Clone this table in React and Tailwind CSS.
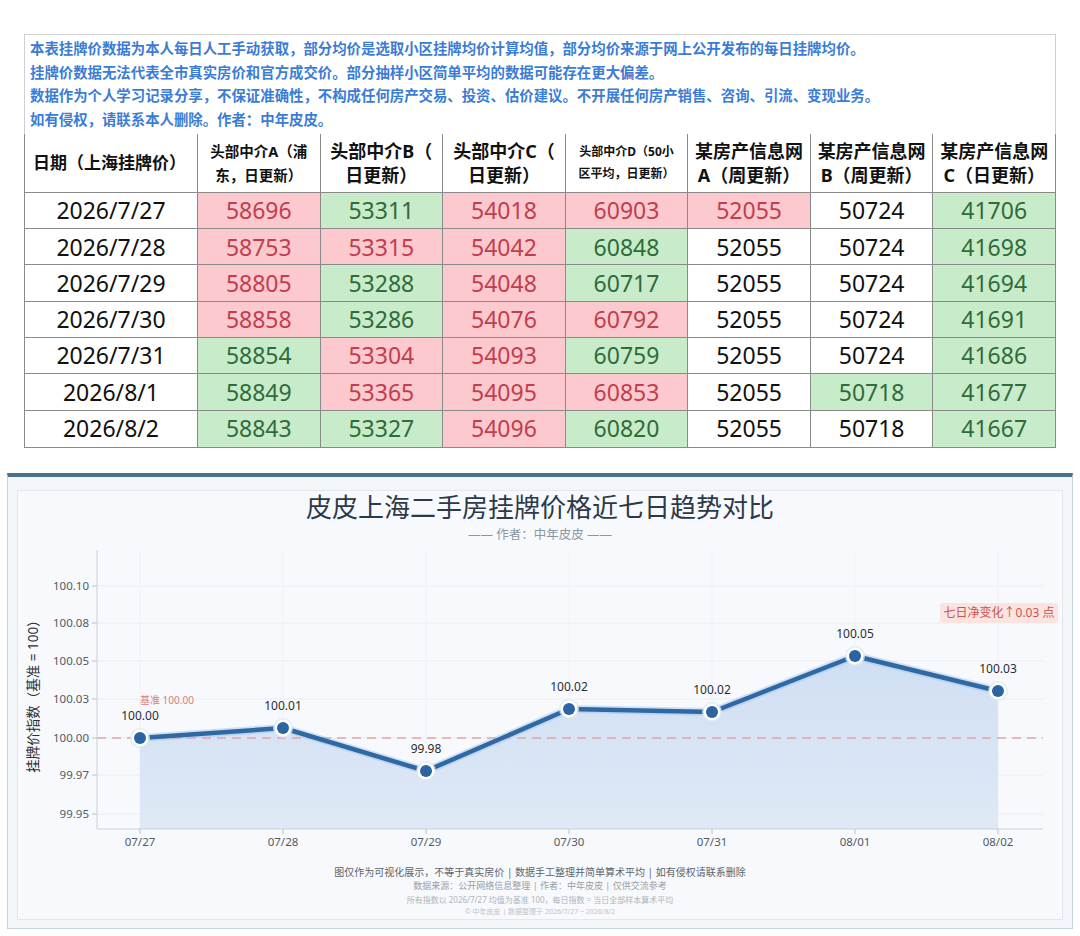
import React from 'react';

const rows = [
  ['2026/7/27', [['58696','r'],['53311','g'],['54018','r'],['60903','r'],['52055','r'],['50724','w'],['41706','g']]],
  ['2026/7/28', [['58753','r'],['53315','r'],['54042','r'],['60848','g'],['52055','w'],['50724','w'],['41698','g']]],
  ['2026/7/29', [['58805','r'],['53288','g'],['54048','r'],['60717','g'],['52055','w'],['50724','w'],['41694','g']]],
  ['2026/7/30', [['58858','r'],['53286','g'],['54076','r'],['60792','r'],['52055','w'],['50724','w'],['41691','g']]],
  ['2026/7/31', [['58854','g'],['53304','r'],['54093','r'],['60759','g'],['52055','w'],['50724','w'],['41686','g']]],
  ['2026/8/1', [['58849','g'],['53365','r'],['54095','r'],['60853','r'],['52055','w'],['50718','g'],['41677','g']]],
  ['2026/8/2', [['58843','g'],['53327','g'],['54096','r'],['60820','g'],['52055','w'],['50718','w'],['41667','g']]],
];

const tone = {
  r: 'bg-[#fcc9ce] text-[#c23d4d]',
  g: 'bg-[#c8ebc9] text-[#2f6b3b]',
  w: 'bg-white text-[#111]',
};

const xs = [140, 283, 426, 569, 712, 855, 998];
const ys = [737, 727, 770, 708, 711, 655, 690];
const vals = ['100.00', '100.01', '99.98', '100.02', '100.02', '100.05', '100.03'];
const dates = ['07/27', '07/28', '07/29', '07/30', '07/31', '08/01', '08/02'];
const yticks = [['100.10', 585], ['100.08', 622], ['100.05', 660], ['100.03', 698], ['100.00', 737], ['99.97', 774], ['99.95', 813]];

function Chart() {
  const line = xs.map((x, i) => `${x},${ys[i]}`).join(' ');
  const area = `140,828 ${line} 998,828`;
  return (
    <svg width="1044" height="315" viewBox="18 540 1044 315" className="block">
      <defs>
        <linearGradient id="af" x1="0" y1="0" x2="0" y2="1">
          <stop offset="0" stopColor="#cfdff3" />
          <stop offset="1" stopColor="#dfe9f6" />
        </linearGradient>
      </defs>
      {yticks.map(([t, y]) => (
        <line key={t} x1="97" x2="1043" y1={y} y2={y} stroke="#e9eef3" strokeWidth="1" />
      ))}
      {xs.map((x) => (
        <line key={x} x1={x} x2={x} y1="549" y2="828" stroke="#eef2f6" strokeWidth="1" />
      ))}
      <polygon points={area} fill="url(#af)" />
      <line x1="97" x2="1043" y1="737" y2="737" stroke="#e6a2a2" strokeWidth="1.4" strokeDasharray="9 6" />
      <line x1="97" x2="97" y1="549" y2="828" stroke="#c9d1d9" strokeWidth="1" />
      <line x1="97" x2="1043" y1="828" y2="828" stroke="#c9d1d9" strokeWidth="1" />
      {yticks.map(([t, y]) => (
        <g key={t}>
          <line x1="92" x2="97" y1={y} y2={y} stroke="#b9c2cb" />
          <text x="89" y={y + 4} textAnchor="end" fontSize="11.5" fill="#555b62">{t}</text>
        </g>
      ))}
      {xs.map((x, i) => (
        <g key={x}>
          <line x1={x} x2={x} y1="828" y2="833" stroke="#b9c2cb" />
          <text x={x} y="845" textAnchor="middle" fontSize="11.5" fill="#555b62">{dates[i]}</text>
        </g>
      ))}
      <text x="33" y="692" transform="rotate(-90 33 692)" textAnchor="middle" dominantBaseline="central" fontSize="13.5" fill="#2b2f33">挂牌价指数（基准 = 100）</text>
      <text x="140" y="703" fontSize="10" fill="#d8807b">基准 100.00</text>
      <polyline points={line} fill="none" stroke="#9cc4ec" strokeWidth="8" strokeOpacity="0.45" strokeLinejoin="round" />
      <polyline points={line} fill="none" stroke="#2f68a3" strokeWidth="4.5" strokeLinejoin="round" />
      {xs.map((x, i) => (
        <g key={x}>
          <circle cx={x} cy={ys[i]} r="10" fill="#dbe8f4" opacity="0.8" />
          <circle cx={x} cy={ys[i]} r="8.5" fill="#ffffff" />
          <circle cx={x} cy={ys[i]} r="6" fill="#2b64a0" />
          <text x={x} y={ys[i] - 18} textAnchor="middle" fontSize="12" fill="#2a2e33">{vals[i]}</text>
        </g>
      ))}
      <rect x="940" y="602" width="118" height="20" rx="3" fill="#fbe3e0" />
      <text x="999" y="616" textAnchor="middle" fontSize="12" fill="#c9564e">七日净变化↑0.03 点</text>
    </svg>
  );
}

export default function App() {
  return (
    <div className="w-[1080px] h-[936px] bg-white overflow-hidden font-['Noto_Sans','Noto_Sans_CJK_SC',sans-serif]">
      <div className="px-[24px] pt-[34px]">
        <div className="border border-b-0 border-[#cfcfcf] px-[5px] pt-[2px] pb-[2px] text-[14.4px] leading-[23.7px] font-bold text-[#3b7cd6]">
          <div>本表挂牌价数据为本人每日人工手动获取，部分均价是选取小区挂牌均价计算均值，部分均价来源于网上公开发布的每日挂牌均价。</div>
          <div>挂牌价数据无法代表全市真实房价和官方成交价。部分抽样小区简单平均的数据可能存在更大偏差。</div>
          <div>数据作为个人学习记录分享，不保证准确性，不构成任何房产交易、投资、估价建议。不开展任何房产销售、咨询、引流、变现业务。</div>
          <div>如有侵权，请联系本人删除。作者：中年皮皮。</div>
        </div>
        <div className="grid grid-cols-[173px_repeat(7,1fr)] border-l border-b border-[#8a8a8a] text-[#111]">
          <div className="h-[59px] flex items-center pl-[8px] border-r border-b border-[#8a8a8a] text-[17px] font-bold">日期（上海挂牌价）</div>
          <div className="h-[59px] flex items-center justify-center text-center border-r border-b border-[#8a8a8a] text-[14.5px] font-bold leading-[24px]">头部中介A（浦<br />东，日更新）</div>
          <div className="h-[59px] flex items-center justify-center text-center border-r border-b border-[#8a8a8a] text-[18px] font-bold leading-[24px]">头部中介B（<br />日更新）</div>
          <div className="h-[59px] flex items-center justify-center text-center border-r border-b border-[#8a8a8a] text-[18px] font-bold leading-[24px]">头部中介C（<br />日更新）</div>
          <div className="h-[59px] flex items-center justify-center text-center border-r border-b border-[#8a8a8a] text-[12px] font-bold leading-[22px]">头部中介D（50小<br />区平均，日更新）</div>
          <div className="h-[59px] flex items-center justify-center text-center border-r border-b border-[#8a8a8a] text-[18px] font-bold leading-[24px]">某房产信息网<br />A（周更新）</div>
          <div className="h-[59px] flex items-center justify-center text-center border-r border-b border-[#8a8a8a] text-[18px] font-bold leading-[24px]">某房产信息网<br />B（周更新）</div>
          <div className="h-[59px] flex items-center justify-center text-center border-r border-b border-[#8a8a8a] text-[18px] font-bold leading-[24px]">某房产信息网<br />C（日更新）</div>
          {rows.map(([d, cells], ri) => (
            <React.Fragment key={d}>
              <div className={`h-[36.3px] flex items-center justify-center border-r border-[#8a8a8a] text-[23px] ${ri < 6 ? 'border-b' : ''}`}>{d}</div>
              {cells.map(([v, t], ci) => (
                <div key={ci} className={`h-[36.3px] flex items-center justify-center border-r border-[#8a8a8a] text-[23px] ${ri < 6 ? 'border-b' : ''} ${tone[t]}`}>{v}</div>
              ))}
            </React.Fragment>
          ))}
        </div>
      </div>
      <div className="ml-[7px] mt-[25px] w-[1066px] h-[456px] border border-[#c6d2dd] border-t-[4px] border-t-[#4b6f90] bg-[#f3f6f9] pt-[13px] px-[9px]">
        <div className="h-[430px] border border-[#e2e8ee] bg-[#f7f9fc] flex flex-col items-center">
          <div className="pt-[1px] text-[26px] leading-[30px] text-[#2c3a48]">皮皮上海二手房挂牌价格近七日趋势对比</div>
          <div className="mt-[5px] text-[12.5px] leading-[16px] text-[#8b97a3]">—— 作者：中年皮皮 ——</div>
          <div className="-mt-[2px] self-stretch">
            <Chart />
          </div>
          <div className="mt-[9px] text-[10px] leading-[14px] text-[#5f656b]">图仅作为可视化展示，不等于真实房价 | 数据手工整理并简单算术平均 | 如有侵权请联系删除</div>
          <div className="text-[9px] leading-[14px] text-[#9aa0a6]">数据来源：公开网络信息整理 | 作者：中年皮皮 | 仅供交流参考</div>
          <div className="text-[8px] leading-[13px] text-[#b0b5ba]">所有指数以 2026/7/27 均值为基准 100，每日指数 = 当日全部样本算术平均</div>
          <div className="text-[7px] leading-[12px] text-[#bfc4c8]">© 中年皮皮 | 数据整理于 2026/7/27 ~ 2026/8/2</div>
        </div>
      </div>
    </div>
  );
}
